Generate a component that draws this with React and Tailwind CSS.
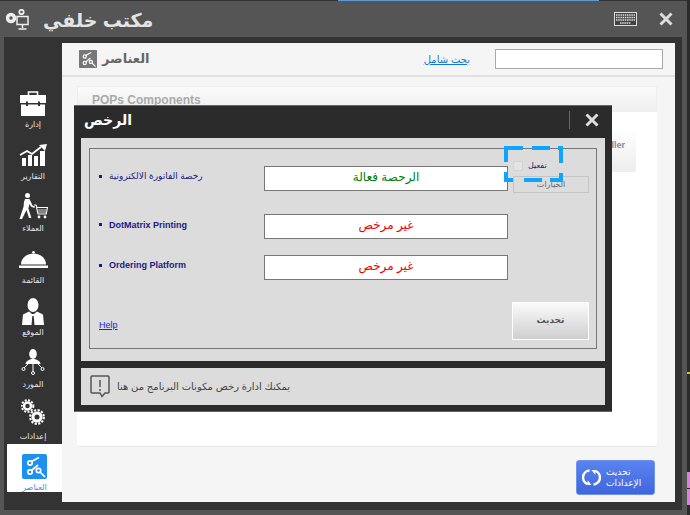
import React from "react";

const ar = "font-['Liberation_Sans','DejaVu_Sans',sans-serif]";

function Side({ label, children, shift = "" }) {
  return (
    <div className="h-[52px] flex flex-col items-center">
      <div className={`h-[36px] flex items-end justify-center ${shift}`}>{children}</div>
      <span dir="rtl" className="text-[8px] leading-[12px] font-normal text-[#e4e8ee] mt-[5px] whitespace-nowrap">{label}</span>
    </div>
  );
}

function Row({ label, value, color, dir, mb, labelSize }) {
  return (
    <div className="flex items-center" style={{ marginBottom: mb }}>
      <div className="w-[174px] flex items-center pb-1">
        <span className="w-[3px] h-[3px] bg-[#1a1a80] ml-[9px] mr-[7px] shrink-0" />
        <span dir={dir} className={`${labelSize} text-[#1a1a88] whitespace-nowrap`}>{label}</span>
      </div>
      <div dir="rtl" className="w-[244px] h-[25px] pb-[4px] bg-white border border-[#777] flex items-center justify-center text-[12px] font-normal" style={{ color }}>{value}</div>
    </div>
  );
}

export default function App() {
  return (
    <div className={`relative w-[690px] h-[515px] overflow-hidden bg-[#2b2b2b] ${ar}`}>
      <div className="absolute left-[338px] top-0 w-[261px] h-[1px] bg-[#5b9bd5]" />
      <div className="w-[687px] h-[515px] bg-[#555] flex flex-col border-t border-[#333]">
        <div className="h-[36px] flex items-center pl-[6px] pr-[14px] shrink-0">
          <svg width="24" height="21" viewBox="0 0 24 21" className="text-[#eee]">
            <circle cx="5" cy="9" r="3.500" fill="none" stroke="currentColor" strokeWidth="3.500" />
            <circle cx="15.500" cy="3" r="2.200" fill="none" stroke="currentColor" strokeWidth="1.800" />
            <rect x="11" y="7.500" width="11" height="8" fill="none" stroke="currentColor" strokeWidth="1.500" />
            <path d="M16.500 15v4M12.500 20h8" stroke="currentColor" strokeWidth="1.500" />
          </svg>
          <span dir="rtl" className="ml-[13px] pt-[4px] text-[19px] font-bold text-[#e4e4e4]">مكتب خلفي</span>
          <div className="flex-1" />
          <svg width="23" height="14" viewBox="0 0 23 14" className="mr-[22px]">
            <rect x=".5" y=".5" width="22" height="13" fill="#444" stroke="#ddd" />
            <path d="M2 3h19M2 5.500h19M2 8h19M6 11h11" stroke="#ddd" strokeWidth="1.500" strokeDasharray="1.500 .7" />
          </svg>
          <svg width="14" height="14" viewBox="0 0 14 14">
            <path d="M1.500 1.500l11 11M12.500 1.500l-11 11" stroke="#ddd" strokeWidth="3" />
          </svg>
        </div>
        <div className="flex-1 ml-[4px] mr-[5px] mb-[5px] bg-[#333] flex pt-[6px] pb-[8px] pr-[7px] min-h-0">
          <aside className="w-[58px] shrink-0 relative pt-[36px] flex flex-col">
            <Side label="إدارة" shift="translate-y-[2px]">
              <svg width="26" height="25" viewBox="0 0 26 25" fill="#fff">
                <path d="M8.500 4V1h9v3" fill="none" stroke="#fff" strokeWidth="1.600" />
                <path d="M0 4h26v8H20v-1.500h-2V12H8v-1.500H6V12H0z" />
                <path d="M1 13.500h5V15h2v-1.500h10V15h2v-1.500h5V25H1z" />
              </svg>
            </Side>
            <Side label="التقارير">
              <svg width="28" height="22" viewBox="0 0 28 22" fill="#fff">
                <path d="M1 11l7-4 5 3 9-7" fill="none" stroke="#fff" strokeWidth="1.800" />
                <path d="M20 1l8-1-2 7z" />
                <path d="M3 14h4v8H3zM9 11h4v11H9zM15 12h4v10h-4zM21 7h5v15h-5z" />
              </svg>
            </Side>
            <Side label="العملاء" shift="translate-y-[1px]">
              <svg width="29" height="26" viewBox="0 0 29 26" fill="#fff">
                <circle cx="8.500" cy="2.500" r="2.500" />
                <path d="M6 6h4.500l3 6.500 2.500 1-.6 1.500-3.500-1.500-1.500-2.500-1 4.500 3 9.500H10l-2.500-8L3 26H0.500l4-12 .5-5z" />
                <path d="M15 12h2l1 2.500h10.500l-1.300 6.500H19l-1.500-6.500" fill="none" stroke="#fff" strokeWidth="1.100" />
                <path d="M18.500 17h9M19 19h8" stroke="#fff" strokeWidth=".8" />
                <circle cx="20" cy="24" r="1.400" /><circle cx="26" cy="24" r="1.400" />
              </svg>
            </Side>
            <Side label="القائمة" shift="-translate-y-[2px]">
              <svg width="29" height="17" viewBox="0 0 29 17" fill="#fff">
                <circle cx="14.500" cy="1.300" r="1.300" />
                <path d="M2 13.500C2 7 8 2.500 14.500 2.500S27 7 27 13.500z" />
                <path d="M0 14.500h29V17H0z" />
              </svg>
            </Side>
            <Side label="الموقع" shift="translate-y-[3px]">
              <svg width="22" height="27" viewBox="0 0 22 27" fill="#fff">
                <ellipse cx="11" cy="7" rx="5.500" ry="7" />
                <path d="M7 13.500l-6 3L0 27h9.500l.8-9h1.400l.8 9H22l-1-10.500-6-3-3 2.500h-2z" />
              </svg>
            </Side>
            <Side label="المورد" shift="translate-y-[1px]">
              <svg width="24" height="26" viewBox="0 0 24 26" fill="#fff">
                <ellipse cx="12" cy="5" rx="3.800" ry="5" />
                <path d="M4.500 15c0-3 4.500-5 7.500-5s7.500 2 7.500 5z" />
                <path d="M12 15v8M7 15l-4 4M17 15l4 4" stroke="#fff" />
                <circle cx="12" cy="24" r="1.500" fill="none" stroke="#fff" />
                <circle cx="2.500" cy="20" r="1.500" fill="none" stroke="#fff" />
                <circle cx="21.500" cy="20" r="1.500" fill="none" stroke="#fff" />
              </svg>
            </Side>
            <Side label="إعدادات" shift="-translate-y-[1px]">
              <svg width="24" height="26" viewBox="0 0 24 26" fill="none" stroke="#fff">
                <circle cx="6.500" cy="7" r="3.500" strokeWidth="2.500" />
                <circle cx="6.500" cy="7" r="5.800" strokeWidth="2" strokeDasharray="2 1.400" />
                <circle cx="16" cy="18" r="4" strokeWidth="3" />
                <circle cx="16" cy="18" r="6.800" strokeWidth="2.200" strokeDasharray="2.200 1.400" />
              </svg>
            </Side>
            <div className="absolute left-[3px] top-[401px] w-[55px] h-[48px] bg-white flex flex-col items-center pt-[10px]">
              <svg width="25" height="25" viewBox="0 0 25 25" fill="#1e90f0" stroke="#fff" strokeWidth="1.700" className="shrink-0">
                <rect width="25" height="25" rx="2" strokeWidth="0" />
                <path d="M9.500 7.500L17 3.500M9.500 16.500L16 11" />
                <path d="M18 18l5 5" />
                <circle cx="8" cy="9" r="2.200" />
                <circle cx="8" cy="18" r="2.200" />
                <circle cx="16.500" cy="16.500" r="2.200" />
              </svg>
              <span dir="rtl" className="text-[8px] font-normal text-[#3b8fe8] leading-[12px] mt-[3px]">العناصر</span>
            </div>
          </aside>
          <main className="flex-1 bg-[#f5f5f5] flex flex-col min-w-0">
            <header className="h-[34px] shrink-0 border-b-2 border-[#e0e0e0] flex items-center pl-[17px] pr-[12px]">
              <svg width="18" height="18" viewBox="0 0 25 25" fill="#777" stroke="#fff" strokeWidth="1.700">
                <rect width="25" height="25" rx="1" strokeWidth="0" />
                <path d="M9.500 7.500L17 3.500M9.500 16.500L16 11" />
                <path d="M18 18l5 5" />
                <circle cx="8" cy="9" r="2.200" />
                <circle cx="8" cy="18" r="2.200" />
                <circle cx="16.500" cy="16.500" r="2.200" />
              </svg>
              <span dir="rtl" className="ml-[5px] text-[13px] font-bold text-[#666]">العناصر</span>
              <div className="flex-1" />
              <a dir="rtl" className="text-[10px] font-normal text-[#1578d8] underline mr-[25px]">بحث شامل</a>
              <div className="w-[168px] h-[20px] bg-white border border-[#aaa]" />
            </header>
            <div className="ml-[15px] mr-[18px] mt-[9px] h-[361px] bg-white rounded-b-[3px] border-b border-[#e6e6e6]">
              <div className="h-[26px] border border-[#eee] bg-[linear-gradient(#fafafa,#efefef)] flex items-center pl-[14px] pt-[1px] text-[12px] font-bold text-[#aaa]">POPs Components</div>
              <div className="flex justify-end mt-[16px] mr-[21px]">
                <div className="w-[100px] h-[44px] rounded-[2px] bg-[linear-gradient(#fff,#ededed)] flex items-start justify-end pt-[11px] pr-[11px] text-[9px] font-bold text-[#889]">Controller</div>
              </div>
            </div>
            <div className="flex justify-end pr-[20px] pt-[13px]">
              <button className="w-[79px] h-[35px] rounded-[3px] border border-[#6b93ee] bg-[linear-gradient(#5a83f0,#3f66dc)] flex items-center pl-[5px] text-white">
                <svg width="19" height="19" viewBox="0 0 20 20" fill="none" stroke="#fff" strokeWidth="2.600" className="shrink-0">
                  <path d="M8 2.500A7.500 7.500 0 0 0 6 17" />
                  <path d="M12 17.500A7.500 7.500 0 0 0 14 3" />
                  <path d="M6 13v5h4z" fill="#fff" strokeWidth="0" />
                  <path d="M14 7V2h-4z" fill="#fff" strokeWidth="0" />
                </svg>
                <span dir="rtl" className="ml-[5px] text-[9px] font-normal leading-[11px] text-left whitespace-nowrap">تحديث<br />الإعدادات</span>
              </button>
            </div>
          </main>
        </div>
      </div>

      <div className="absolute right-0 top-[372px] w-[3px] h-[2px] bg-[#c8c820]" />
      <div className="absolute right-0 top-[472px] w-[3px] h-[16px] bg-[#dd7fdd]" />
      <div className="absolute right-0 top-[489px] w-[3px] h-[16px] bg-[#dd7fdd]" />

      <div className="absolute left-[74px] top-[105px] w-[538px] h-[307px] bg-[#2b2b2b] border-t border-[#666] border-b border-b-[#666] flex flex-col px-[7px]">
        <div className="h-[32px] flex items-center shrink-0 -mx-[7px] pl-[10px] pb-[4px]">
          <span dir="rtl" className="text-[14px] font-bold text-white">الرخص</span>
          <div className="flex-1" />
          <div className="w-px h-[18px] bg-[#666] mr-[15px]" />
          <svg width="14" height="14" viewBox="0 0 14 14" className="mr-[13px]">
            <path d="M1.500 1.500l11 11M12.500 1.500l-11 11" stroke="#ddd" strokeWidth="3" />
          </svg>
        </div>
        <div className="h-[223px] bg-[#dcdcdc] pt-[10px] px-[8px] relative shrink-0">
          <div className="h-[201px] border border-[#777] pt-[17px] relative">
            <Row label="رخصة الفاتورة الالكترونية" labelSize="text-[9px] font-normal" dir="rtl" value="الرحصة فعالة" color="#008000" mb={23} />
            <Row label="DotMatrix Printing" labelSize="text-[9px] font-bold translate-y-[1px]" value="غير مرخص" color="#f00000" mb={16} />
            <Row label="Ordering Platform" labelSize="text-[9px] font-bold" value="غير مرخص" color="#f00000" />
            <a className="absolute left-[9px] top-[170px] text-[9px] text-[#2222dd] underline">Help</a>
            <div className="absolute left-[423px] top-[27px] w-[76px] h-[17px] border border-[#c4c4c4] flex items-center justify-center text-[8px] font-normal text-[#666]">الخيارات</div>
            <div className="absolute left-[422px] top-[153px] w-[77px] h-[38px] border border-white bg-[linear-gradient(#fafafa,#cfcfcf)] flex items-center justify-center text-[9px] font-bold text-[#555]">تحديث</div>
            <div className="absolute left-[423px] top-[12px] w-[10px] h-[10px] rounded-[2px] bg-[#e4e4e4] border border-[#d2d2d2]" />
            <span dir="rtl" className="absolute left-[438px] top-[11px] text-[8px] font-normal text-[#1a1a88]">تفعيل</span>
          </div>
        </div>
        <div className="h-[37px] mt-[7px] bg-[#dcdcdc] flex items-center pl-[9px] shrink-0">
          <svg width="20" height="23" viewBox="0 0 20 23" fill="none" stroke="#555" strokeWidth="1.500">
            <path d="M2 1h16a1 1 0 0 1 1 1v15a1 1 0 0 1-1 1h-3l-3 3.500L10 18H2a1 1 0 0 1-1-1V2a1 1 0 0 1 1-1z" />
            <path d="M10 5v7M10 14v2" />
          </svg>
          <span dir="rtl" className="ml-[7px] text-[10px] font-normal text-[#444]">يمكنك ادارة رخص مكونات البرنامج من هنا</span>
        </div>
      </div>

      <svg className="absolute left-[504px] top-[146px]" width="59" height="36" viewBox="0 0 59 36" fill="#0ea5ff">
        <rect x="0" y="0" width="19" height="4" />
        <rect x="28" y="0" width="18" height="4" />
        <rect x="54" y="0" width="5" height="4" />
        <rect x="0" y="0" width="4" height="16" />
        <rect x="55" y="0" width="4" height="17" />
        <rect x="0" y="26" width="4" height="10" />
        <rect x="55" y="27" width="4" height="9" />
        <rect x="0" y="32" width="9" height="4" />
        <rect x="20" y="32" width="18" height="4" />
        <rect x="46" y="32" width="13" height="4" />
      </svg>
    </div>
  );
}
